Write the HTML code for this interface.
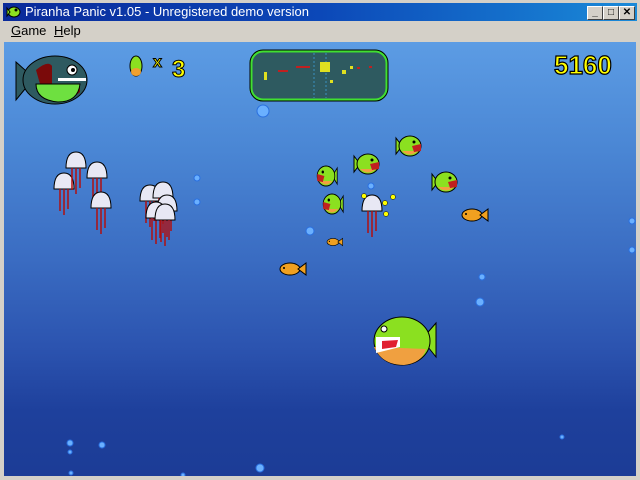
<!DOCTYPE html>
<html><head><style>
*{margin:0;padding:0}
body{width:640px;height:480px;overflow:hidden;background:#d4d0c8;font-family:"Liberation Sans",sans-serif;position:relative}
#title{position:absolute;left:3px;top:3px;width:634px;height:18px;background:linear-gradient(90deg,#0a2a9a,#0c48b8 50%,#1a8ad8);color:#fff;font-size:13px;line-height:18px}
#title span{position:absolute;left:22px}
.btn{position:absolute;top:3px;width:14px;height:12px;background:#d4d0c8;border:1px solid;border-color:#fff #404040 #404040 #fff;color:#000;font-size:10px;line-height:12px;text-align:center;font-weight:bold}
#menu{position:absolute;left:3px;top:21px;width:634px;height:20px;font-size:13px;line-height:20px}
#game{position:absolute;left:4px;top:42px;width:632px;height:434px;background:linear-gradient(#5c9ce4 0%,#4a86d4 25%,#3a6cc2 50%,#2c54b0 70%,#1e409c 85%,#1c3c96 100%)}
svg{position:absolute;left:0;top:0}
</style></head><body>
<div id="title"><svg width="18" height="18" style="left:2px"><ellipse cx="9" cy="9" rx="6" ry="5" fill="#8be020" stroke="#000"/><polygon points="2,5 5,9 2,13" fill="#8be020" stroke="#000"/><circle cx="11" cy="7" r="1.5" fill="#000"/></svg><span>Piranha Panic v1.05 - Unregistered demo version</span>
<div class="btn" style="left:584px">_</div><div class="btn" style="left:600px">□</div><div class="btn" style="left:616px">✕</div></div>
<div id="menu"><span style="position:absolute;left:8px"><u>G</u>ame</span><span style="position:absolute;left:51px"><u>H</u>elp</span></div>
<div id="game">
<svg width="632" height="434" viewBox="4 42 632 434">
<!-- big HUD piranha -->
<polygon points="16,62 34,78 16,100" fill="#2e5a60" stroke="#000"/>
<ellipse cx="55" cy="80" rx="32" ry="24" fill="#2e5a60" stroke="#000"/>
<path d="M36,70 Q48,60 52,66 L52,96 Q70,102 80,92 L80,84 L40,84 Z" fill="#7a0a0a"/>
<path d="M36,84 L80,84 Q78,102 58,102 Q36,100 36,84Z" fill="#6ee040" stroke="#000"/>
<circle cx="72" cy="70" r="5" fill="#fff" stroke="#000"/><circle cx="73" cy="70" r="2" fill="#000"/>
<rect x="58" y="78" width="28" height="3" fill="#fff"/>
<!-- lives -->
<ellipse cx="136" cy="66" rx="6" ry="10" fill="#8be020" stroke="#000"/><ellipse cx="136" cy="72" rx="5" ry="4" fill="#f0a030"/>
<text x="153" y="67" font-size="16" font-weight="bold" fill="#ff0" stroke="#000" stroke-width="1" font-family="Liberation Sans">x</text>
<text x="172" y="77" font-size="24" font-weight="bold" fill="#ff0" stroke="#000" stroke-width="1" font-family="Liberation Sans">3</text>
<!-- radar -->
<rect x="251" y="51" width="136" height="49" rx="12" fill="#2e5a60" stroke="#40e030" stroke-width="3"/>
<rect x="250" y="50" width="138" height="51" rx="13" fill="none" stroke="#000"/>
<line x1="314" y1="53" x2="314" y2="98" stroke="#3a90c0" stroke-dasharray="2,2"/>
<line x1="326" y1="53" x2="326" y2="98" stroke="#3a90c0" stroke-dasharray="2,2"/>
<g fill="#e0e020"><rect x="264" y="72" width="3" height="8"/><rect x="320" y="62" width="10" height="10"/><rect x="342" y="70" width="4" height="4"/><rect x="350" y="66" width="3" height="3"/><rect x="330" y="80" width="3" height="3"/></g>
<g fill="#c02020"><rect x="278" y="70" width="10" height="2"/><rect x="296" y="66" width="14" height="2"/><rect x="357" y="67" width="3" height="2"/><rect x="369" y="66" width="3" height="2"/></g>
<!-- score -->
<text x="554" y="74" font-size="26" font-weight="bold" fill="#ff0" stroke="#000" stroke-width="1.2" font-family="Liberation Sans">5160</text>
<!-- bubbles -->
<g fill="#6ab0ff" stroke="#2a70e0"><circle cx="263" cy="111" r="6"/><circle cx="197" cy="178" r="3"/><circle cx="197" cy="202" r="3"/><circle cx="310" cy="231" r="4"/><circle cx="371" cy="186" r="3"/><circle cx="482" cy="277" r="3"/><circle cx="480" cy="302" r="4"/><circle cx="632" cy="221" r="3"/><circle cx="632" cy="250" r="3"/><circle cx="562" cy="437" r="2"/><circle cx="70" cy="443" r="3"/><circle cx="70" cy="452" r="2"/><circle cx="102" cy="445" r="3"/><circle cx="71" cy="473" r="2"/><circle cx="183" cy="475" r="2"/><circle cx="260" cy="468" r="4"/></g>
<!-- jellyfish -->
<g id="j"><path d="M-10,8 Q-10,-8 0,-8 Q10,-8 10,8Z" fill="#e8e8f4" stroke="#000"/><g stroke="#b01010" stroke-width="1.5"><line x1="-4" y1="8" x2="-4" y2="30"/><line x1="0" y1="8" x2="0" y2="34"/><line x1="4" y1="8" x2="4" y2="28"/></g></g>
<use href="#j" x="64" y="181"/><use href="#j" x="76" y="160"/><use href="#j" x="97" y="170"/><use href="#j" x="101" y="200"/>
<use href="#j" x="150" y="193"/><use href="#j" x="163" y="190"/><use href="#j" x="167" y="203"/><use href="#j" x="156" y="210"/><use href="#j" x="165" y="212"/>
<use href="#j" x="372" y="203"/>
<!-- small piranhas -->
<g id="p"><polygon points="-14,-8 -8,0 -14,8" fill="#8be020" stroke="#000"/><ellipse cx="0" cy="0" rx="11" ry="10" fill="#8be020" stroke="#000"/><path d="M-8,5 Q0,12 8,5 Z" fill="#f0a040"/><path d="M2,0 L11,-2 L11,5 L4,6Z" fill="#c02020"/><circle cx="4" cy="-4" r="1.5" fill="#000"/></g>
<use href="#p" x="410" y="146"/><use href="#p" x="368" y="164"/><use href="#p" x="446" y="182"/>
<g transform="translate(326,176) scale(-0.8,1)"><use href="#p"/></g><g transform="translate(332,204) scale(-0.8,1)"><use href="#p"/></g>
<!-- big piranha -->
<g transform="translate(402,341)"><polygon points="20,-2 34,-18 34,16 26,6" fill="#8be020" stroke="#000"/><ellipse cx="0" cy="0" rx="28" ry="24" fill="#8be020" stroke="#000"/><path d="M-28,6 Q-20,24 2,24 Q20,22 24,8 Z" fill="#f0a040"/><path d="M-26,-4 L-2,-4 L-2,6 L-26,12Z" fill="#fff"/><path d="M-20,0 L-4,-1 L-6,6 L-20,8Z" fill="#e02030"/><circle cx="-18" cy="-12" r="3" fill="#fff" stroke="#000"/></g>
<!-- goldfish -->
<g id="g"><ellipse cx="0" cy="0" rx="10" ry="6" fill="#f0a020" stroke="#000"/><polygon points="8,0 16,-6 16,6" fill="#f0a020" stroke="#000"/><circle cx="-6" cy="-1" r="1" fill="#000"/></g>
<use href="#g" x="472" y="215"/><use href="#g" x="290" y="269"/><g transform="translate(333,242) scale(0.6)"><use href="#g"/></g>
<g fill="#ff0" stroke="#000" stroke-width="0.5"><circle cx="364" cy="196" r="2.5"/><circle cx="385" cy="203" r="2.5"/><circle cx="393" cy="197" r="2.5"/><circle cx="386" cy="214" r="2.5"/></g>
</svg></div>
</body></html>
